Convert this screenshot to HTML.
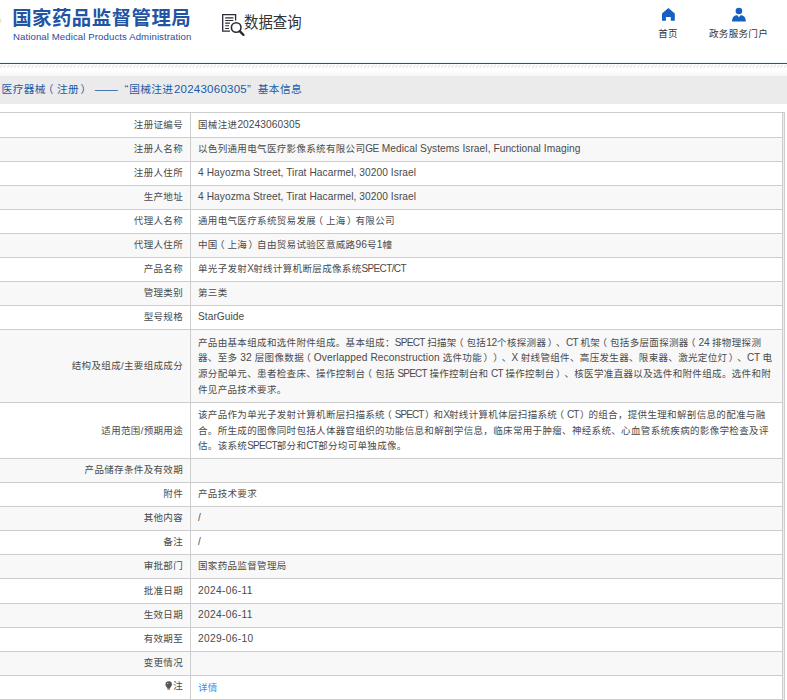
<!DOCTYPE html>
<html lang="zh-CN">
<head>
<meta charset="utf-8">
<title>国家药品监督管理局 数据查询</title>
<style>
html,body{margin:0;padding:0;background:#fff;}
body{width:787px;height:700px;position:relative;overflow:hidden;font-family:"Liberation Sans","Noto Sans CJK SC",sans-serif;font-size:9.5px;letter-spacing:0.34px;color:#4a4a4a;text-spacing-trim:space-all;}
.abs{position:absolute;}
#logo{position:absolute;left:12.2px;top:3.6px;height:28px;line-height:28px;font-size:19.4px;font-weight:700;color:#2354a3;white-space:nowrap;letter-spacing:0.5px;}
#logoen{position:absolute;left:13px;top:30px;height:13px;line-height:13px;font-size:9.6px;color:#1f4e9c;white-space:nowrap;letter-spacing:0.1px;}
#dq{position:absolute;left:244.3px;top:11.3px;height:24px;line-height:24px;font-size:16px;letter-spacing:0;color:#333;white-space:nowrap;transform-origin:0 50%;transform:scaleX(0.9);}
.nav{position:absolute;top:27px;height:13px;line-height:13px;font-size:9.5px;color:#333;white-space:nowrap;text-align:center;}
#blue{position:absolute;left:0;top:63px;width:787px;height:1px;background:#2d527e;box-shadow:0 -1px 0 #eefafd;}
#hatch{position:absolute;left:0;top:64px;width:787px;height:4px;}
#bar{position:absolute;left:0;top:76px;width:787px;height:28px;background:#ebebeb;}
#bar>span{position:absolute;top:0;height:28px;line-height:27px;color:#1c5aa6;font-size:10.7px;letter-spacing:0.37px;white-space:nowrap;}
#bar>.d{font-family:"Noto Sans CJK SC",sans-serif;letter-spacing:0;transform-origin:0 50%;transform:scaleX(1.36);}
#bar>.n{font-size:11.5px;letter-spacing:0.25px;}
#tb{position:absolute;left:0;top:112px;width:785px;height:588px;border-top:1px solid #cecdce;border-right:1px solid #cecdce;box-sizing:border-box;background:#ececf0;}
.r{position:absolute;left:0;width:783px;box-sizing:border-box;border-bottom:1px solid #cecdce;border-right:1px solid #cecdce;}
.k{position:absolute;left:0;top:0;bottom:0;width:191px;box-sizing:border-box;border-right:1px solid #cecdce;display:flex;align-items:center;justify-content:flex-end;padding-right:7px;white-space:nowrap;}
.v{position:absolute;left:191px;top:0;bottom:0;right:0;display:flex;align-items:center;padding-left:7px;white-space:nowrap;}
.s .k,.s .v{padding-bottom:1.5px;}
.vi{line-height:15.74px;}
.l{font-size:10.2px;}
.pl{position:relative;left:-2.7px;}
.pr{position:relative;left:1.4px;}
.u{font-size:10px;}
.k span{line-height:15.74px;}
a{color:#3a8ee6;text-decoration:none;}
.bulb{display:inline-block;vertical-align:-1px;margin-right:1px;}
</style>
</head>
<body>
<div id="logo">国家药品监督管理局</div>
<div id="logoen">National Medical Products Administration</div>
<svg class="abs" style="left:0;top:16px" width="4" height="10" viewBox="0 0 4 10"><path d="M0 2 L1.6 3.5 L1.2 6.5 L0 7.5z" fill="#f6e6c0"/></svg>
<svg class="abs" style="left:220px;top:12px" width="26" height="25" viewBox="220 12 26 25" fill="none" stroke="#2b2b36" stroke-linecap="butt">
<path d="M235.6 20.4V14.6H222.7V31.2H230" stroke-width="1.3"/>
<path d="M225.2 17.9H233.4M225.2 20.5H233.4M225.2 23.1H229.9M225.2 25.8H229M225.2 28.5H229" stroke-width="1.1"/>
<circle cx="236.2" cy="27.5" r="4.8" stroke-width="1.6"/>
<path d="M239.7 31.2L243.4 34.8" stroke-width="2.4" stroke-linecap="round"/>
</svg>
<div id="dq">数据查询</div>
<svg class="abs" style="left:660px;top:6px" width="18" height="17" viewBox="660 6 18 17"><path d="M662 13.4L668.4 8.1L674.8 13.4V20.8H670.8V16.9H665.9V20.8H662z" fill="#1460c4"/></svg>
<div class="nav" id="n1" style="left:648px;width:40px;">首页</div>
<svg class="abs" style="left:730px;top:5px" width="18" height="19" viewBox="730 5 18 19"><circle cx="738.9" cy="11" r="3.3" fill="#1460c4"/><path d="M732 21.6C732 18 733.5 15.8 736 15.2L737.3 15.2L738.9 17.3L740.5 15.2L741.8 15.2C744.3 15.8 745.9 18 745.9 21.6Z" fill="#1460c4"/></svg>
<div class="nav" id="n2" style="left:698px;width:81px;">政务服务门户</div>
<div id="blue"></div>
<svg id="hatch" width="787" height="4"><defs><pattern id="hp" width="3.5" height="4" patternUnits="userSpaceOnUse"><path d="M0.2 3.6L2.4 0.8" stroke="#d9d9d9" stroke-width="0.9"/></pattern></defs><rect width="787" height="4" fill="url(#hp)"/></svg>
<div class="abs" style="left:0;top:70px;width:787px;height:6px;background:linear-gradient(#fff,#f6f6f6)"></div>
<div id="bar"><span style="left:1.6px">医疗器械<span class="pl" style="left:-3px">（</span>注册<span class="pr" style="left:1.6px">）</span></span><span class="d" style="left:94px">——</span><span class="n" style="left:124.6px">“</span><span style="left:129.2px">国械注进</span><span class="n" style="left:173.9px">20243060305”</span><span style="left:257.8px">基本信息</span></div>
<div id="tb"></div>
<div class="r" style="top:113px;height:25px;background:#fff"><div class="k"><span>注册证编号</span></div><div class="v"><div class="vi"><span class="ln" id="v0_0">国械注进<span class="l" style="letter-spacing:0.073px">20243060305</span></span></div></div></div>
<div class="r s" style="top:138px;height:24px;background:#f8f8f8"><div class="k"><span>注册人名称</span></div><div class="v"><div class="vi"><span class="ln" id="v1_0">以色列通用电气医疗影像系统有限公司<span class="l u" style="letter-spacing:-0.447px">GE</span><span class="l" style="letter-spacing:0.053px"> Medical Systems Israel, Functional Imaging</span></span></div></div></div>
<div class="r s" style="top:162px;height:24px;background:#fff"><div class="k"><span>注册人住所</span></div><div class="v"><div class="vi"><span class="ln" id="v2_0"><span class="l" style="letter-spacing:0.065px">4 Hayozma Street, Tirat Hacarmel, 30200 Israel</span></span></div></div></div>
<div class="r s" style="top:186px;height:24px;background:#f8f8f8"><div class="k"><span>生产地址</span></div><div class="v"><div class="vi"><span class="ln" id="v3_0"><span class="l" style="letter-spacing:0.065px">4 Hayozma Street, Tirat Hacarmel, 30200 Israel</span></span></div></div></div>
<div class="r s" style="top:210px;height:24px;background:#fff"><div class="k"><span>代理人名称</span></div><div class="v"><div class="vi"><span class="ln" id="v4_0">通用电气医疗系统贸易发展<span class="pl">（</span>上海<span class="pr">）</span>有限公司</span></div></div></div>
<div class="r s" style="top:234px;height:24px;background:#f8f8f8"><div class="k"><span>代理人住所</span></div><div class="v"><div class="vi"><span class="ln" id="v5_0">中国<span class="pl">（</span>上海<span class="pr">）</span>自由贸易试验区意威路<span class="l" style="letter-spacing:0.050px">96</span>号<span class="l" style="letter-spacing:0.050px">1</span>幢</span></div></div></div>
<div class="r s" style="top:258px;height:24px;background:#fff"><div class="k"><span>产品名称</span></div><div class="v"><div class="vi"><span class="ln" id="v6_0">单光子发射<span class="l u" style="letter-spacing:-0.633px">X</span>射线计算机断层成像系统<span class="l u" style="letter-spacing:-0.633px">SPECT/CT</span></span></div></div></div>
<div class="r s" style="top:282px;height:24px;background:#f8f8f8"><div class="k"><span>管理类别</span></div><div class="v"><div class="vi"><span class="ln" id="v7_0">第三类</span></div></div></div>
<div class="r s" style="top:306px;height:24px;background:#fff"><div class="k"><span>型号规格</span></div><div class="v"><div class="vi"><span class="ln" id="v8_0"><span class="l" style="letter-spacing:0.044px">StarGuide</span></span></div></div></div>
<div class="r" style="top:330px;height:73px;background:#f8f8f8"><div class="k"><span>结构及组成/主要组成成分</span></div><div class="v"><div class="vi"><span class="ln" id="v9_0">产品由基本组成和选件附件组成。基本组成：<span class="l u" style="letter-spacing:-0.729px">SPECT</span><span class="l" style="letter-spacing:-0.229px"> </span>扫描架<span class="pl">（</span>包括<span class="l" style="letter-spacing:-0.229px">12</span>个核探测器<span class="pr">）</span>、<span class="l u" style="letter-spacing:-0.729px">CT</span><span class="l" style="letter-spacing:-0.229px"> </span>机架<span class="pl">（</span>包括多层面探测器<span class="pl">（</span><span class="l" style="letter-spacing:-0.229px">24 </span>排物理探测</span><br><span class="ln" id="v9_1">器、至多<span class="l" style="letter-spacing:0.097px"> 32 </span>层图像数据<span class="pl">（</span><span class="l" style="letter-spacing:0.097px">Overlapped Reconstruction </span>选件功能<span class="pr">）</span><span class="pr">）</span>、<span class="l u" style="letter-spacing:-0.403px">X</span><span class="l" style="letter-spacing:0.097px"> </span>射线管组件、高压发生器、限束器、激光定位灯<span class="pr">）</span>、<span class="l u" style="letter-spacing:-0.403px">CT</span><span class="l" style="letter-spacing:0.097px"> </span>电</span><br><span class="ln" id="v9_2">源分配单元、患者检查床、操作控制台<span class="pl">（</span>包括<span class="l" style="letter-spacing:-0.273px"> </span><span class="l u" style="letter-spacing:-0.773px">SPECT</span><span class="l" style="letter-spacing:-0.273px"> </span>操作控制台和<span class="l" style="letter-spacing:-0.273px"> </span><span class="l u" style="letter-spacing:-0.773px">CT</span><span class="l" style="letter-spacing:-0.273px"> </span>操作控制台<span class="pr">）</span>、核医学准直器以及选件和附件组成。选件和附</span><br><span class="ln" id="v9_3">件见产品技术要求。</span></div></div></div>
<div class="r" style="top:403px;height:56px;background:#fff"><div class="k"><span>适用范围/预期用途</span></div><div class="v"><div class="vi"><span class="ln" id="v10_0">该产品作为单光子发射计算机断层扫描系统<span class="pl">（</span><span class="l u" style="letter-spacing:-0.925px">SPECT</span><span class="pr">）</span>和<span class="l u" style="letter-spacing:-0.925px">X</span>射线计算机体层扫描系统<span class="pl">（</span><span class="l u" style="letter-spacing:-0.925px">CT</span><span class="pr">）</span>的组合，提供生理和解剖信息的配准与融</span><br><span class="ln" id="v10_1">合。所生成的图像同时包括人体器官组织的功能信息和解剖学信息，临床常用于肿瘤、神经系统、心血管系统疾病的影像学检查及评</span><br><span class="ln" id="v10_2">估。该系统<span class="l u" style="letter-spacing:-0.757px">SPECT</span>部分和<span class="l u" style="letter-spacing:-0.757px">CT</span>部分均可单独成像。</span></div></div></div>
<div class="r s" style="top:459px;height:24px;background:#f8f8f8"><div class="k"><span>产品储存条件及有效期</span></div><div class="v"><div class="vi"><span class="ln" id="v11_0"></span></div></div></div>
<div class="r s" style="top:483px;height:24px;background:#fff"><div class="k"><span>附件</span></div><div class="v"><div class="vi"><span class="ln" id="v12_0">产品技术要求</span></div></div></div>
<div class="r s" style="top:507px;height:24px;background:#f8f8f8"><div class="k"><span>其他内容</span></div><div class="v"><div class="vi"><span class="ln" id="v13_0"><span class="l u" style="letter-spacing:-0.500px">/</span></span></div></div></div>
<div class="r s" style="top:531px;height:24px;background:#fff"><div class="k"><span>备注</span></div><div class="v"><div class="vi"><span class="ln" id="v14_0"><span class="l u" style="letter-spacing:-0.500px">/</span></span></div></div></div>
<div class="r s" style="top:555px;height:24px;background:#f8f8f8"><div class="k"><span>审批部门</span></div><div class="v"><div class="vi"><span class="ln" id="v15_0">国家药品监督管理局</span></div></div></div>
<div class="r" style="top:579px;height:25px;background:#fff"><div class="k"><span>批准日期</span></div><div class="v"><div class="vi"><span class="ln" id="v16_0"><span class="l" style="letter-spacing:0.330px">2024-06-11</span></span></div></div></div>
<div class="r s" style="top:604px;height:24px;background:#f8f8f8"><div class="k"><span>生效日期</span></div><div class="v"><div class="vi"><span class="ln" id="v17_0"><span class="l" style="letter-spacing:0.330px">2024-06-11</span></span></div></div></div>
<div class="r s" style="top:628px;height:24px;background:#fff"><div class="k"><span>有效期至</span></div><div class="v"><div class="vi"><span class="ln" id="v18_0"><span class="l" style="letter-spacing:0.330px">2029-06-10</span></span></div></div></div>
<div class="r s" style="top:652px;height:24px;background:#f8f8f8"><div class="k"><span>变更情况</span></div><div class="v"><div class="vi"><span class="ln" id="v19_0"></span></div></div></div>
<div class="r" style="top:676px;height:24px;background:#fff"><div class="k"><span style="position:relative;top:-1.5px"><svg class="bulb" width="7.4" height="9.2" viewBox="0 0 8 10"><path d="M4 .3a3.5 3.5 0 0 0-3.5 3.5c0 1.5 1 2.4 1.6 3.2.3.4.4.9.4 1.3h3c0-.4.1-.9.4-1.3.6-.8 1.6-1.7 1.6-3.2A3.5 3.5 0 0 0 4 .3z" fill="#555"/><rect x="2.7" y="8.5" width="2.6" height="1.1" fill="#888"/><circle cx="2.9" cy="2.7" r=".9" fill="#bbb"/></svg>注</span></div><div class="v"><div class="vi"><span class="ln" id="v20_0"><a>详情</a></span></div></div></div>
</body>
</html>
